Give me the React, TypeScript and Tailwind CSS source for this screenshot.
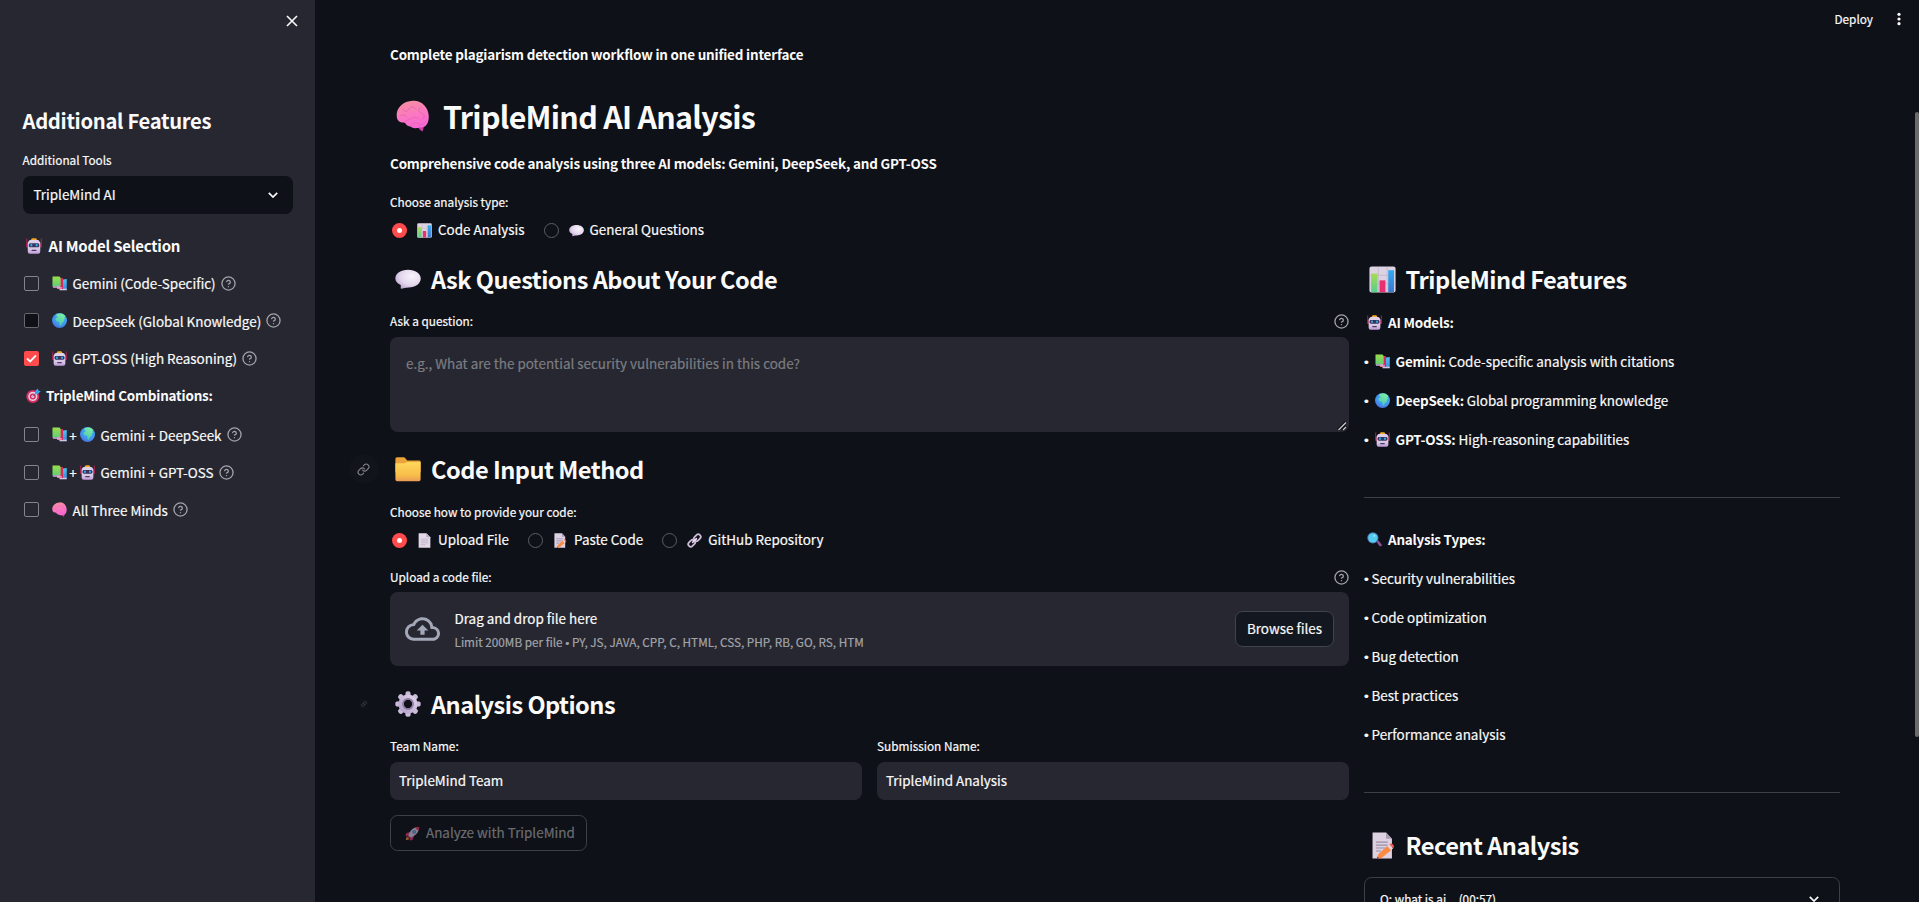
import React, { useState } from 'react';

type EmojiName =
  | 'brain' | 'chart' | 'speech' | 'folder' | 'page' | 'memo' | 'link'
  | 'gear' | 'rocket' | 'robot' | 'books' | 'globe' | 'dart' | 'lens';

const drawings: Record<EmojiName, React.ReactNode> = {
  brain: (
    <>
      <defs>
        <linearGradient id="brainFill" x1="0.3" y1="0" x2="0.6" y2="1">
          <stop offset="0" stopColor="#f58fa0" />
          <stop offset="0.55" stopColor="#fb77c4" />
          <stop offset="1" stopColor="#f767d8" />
        </linearGradient>
      </defs>
      <path d="M20 25 L27 25 L25.500 31.500 Q23 31 21.500 28Z" fill="#c93f9f" />
      <path d="M16 .800 C24 0 31 7 31.300 16 C31.500 24 28 28 23 27.500 C20 28 16 29 14 26.500 C11 26.500 9 24 8.500 22.500 C4 23 .800 21 .700 16 C0 8 7 1 16 .800Z" fill="url(#brainFill)" />
      <g fill="none" stroke="#e865a8" strokeWidth="0.900" strokeLinecap="round">
        <path d="M8 22.500 C11 19 13 20 15 18.500 S19 17 21.500 18.500" />
        <path d="M6 9 C8 12 11 12 12.500 9 S17 6 18.500 9" />
        <path d="M24 7 C21 8 21 12 24 13 S28 16 26 19" />
        <path d="M14 26 C16 22 20 22 22 24 S27 23 28 21" />
        <path d="M4 16 C6 14 9 15 10 17" />
      </g>
    </>
  ),
  chart: (
    <>
      <rect x="0.500" y="0.500" width="31" height="31" rx="2.500" fill="#dcd3e2" />
      <path d="M1 11h30M1 21h30M11 1v30M21.500 1v30" stroke="#c2b7cb" strokeWidth="1" />
      <defs>
        <linearGradient id="barGreen" x1="0" y1="0" x2="0" y2="1"><stop offset="0" stopColor="#a8db50" /><stop offset="1" stopColor="#56cf8d" /></linearGradient>
        <linearGradient id="barBlue" x1="0" y1="0" x2="0" y2="1"><stop offset="0" stopColor="#30aaf2" /><stop offset="1" stopColor="#3b78cf" /></linearGradient>
      </defs>
      <rect x="2.500" y="9" width="7.500" height="22" fill="url(#barGreen)" />
      <rect x="12.500" y="17" width="7" height="14" fill="#e6306f" />
      <rect x="22.800" y="5" width="6.800" height="26" fill="url(#barBlue)" />
    </>
  ),
  speech: (
    <>
      <defs>
        <radialGradient id="speechFill" cx="0.65" cy="0.35" r="0.75"><stop offset="0" stopColor="#f9f4fb" /><stop offset="0.6" stopColor="#e3d7ec" /><stop offset="1" stopColor="#b9a4cf" /></radialGradient>
      </defs>
      <path d="M16 4.500 C25 4.500 31.700 9 31.700 15.500 C31.500 22 25 26.500 17 26.500 C13 26.500 10 28 7.500 28 C6.500 28 7.500 25.500 7 23.500 C3 21.500 .400 19 .400 15.500 C.400 9 7 4.500 16 4.500Z" fill="url(#speechFill)" />
    </>
  ),
  folder: (
    <>
      <defs><linearGradient id="folderFill" x1="0" y1="0" x2="0" y2="1"><stop offset="0" stopColor="#ffd75b" /><stop offset="0.7" stopColor="#f8bd49" /><stop offset="1" stopColor="#e99a58" /></linearGradient></defs>
      <path d="M.5 3.500 Q.5 1.500 2.500 1.500 H10.500 Q12 1.500 13 3 L15 5.500 H30 Q31.500 5.500 31.500 7 V20 H.5Z" fill="#eca43a" />
      <path d="M.5 9 H12 L15 7.500 H31.500 V29 Q31.500 31 29.500 31 H2.500 Q.5 31 .5 29Z" fill="url(#folderFill)" />
    </>
  ),
  page: (
    <>
      <path d="M3.500 .500 H20 L28.500 9 V31.500 H3.500Z" fill="#e2d8e8" />
      <path d="M20 .500 L28.500 9 H20Z" fill="#b8aabf" />
      <path d="M8 13h16M8 17h16M8 21h16M8 25h10" stroke="#b3a6bc" strokeWidth="1.300" />
    </>
  ),
  memo: (
    <>
      <path d="M3 .5 H19 L26 8 V31.500 H3Z" fill="#ddd1e2" />
      <path d="M19 .5 L26 8 H19Z" fill="#a99cb1" />
      <path d="M7 12h14M7 15.500h14M7 19h11M7 22.500h6" stroke="#9a8da6" strokeWidth="1.300" />
      <path d="M20.500 16.500 L25 21.500 L14 30.500 L8 32 L10 26Z" fill="#fb8b43" />
      <path d="M20.500 16.500 L23 14.500 L27.500 19.300 L25 21.500Z" fill="#e8d3d9" />
      <path d="M23 14.500 Q25 12.500 27 14.500 Q29.500 17 27.500 19.300Z" fill="#f2564f" />
      <path d="M8.800 29 L8 32 L11 31Z" fill="#7a3a63" />
    </>
  ),
  link: (
    <g fill="none" strokeLinecap="round">
      <rect x="-8" y="-5.300" width="16" height="10.600" rx="5.300" transform="translate(10 22) rotate(-45)" stroke="#cdbbd8" strokeWidth="3.800" />
      <rect x="-8" y="-5.300" width="16" height="10.600" rx="5.300" transform="translate(22 10) rotate(-45)" stroke="#cdbbd8" strokeWidth="3.800" />
      <path d="M12 20 L20 12" stroke="#eadff0" strokeWidth="3.200" />
    </g>
  ),
  gear: (
    <>
      <defs><linearGradient id="gearFill" x1="1" y1="0" x2="0" y2="1"><stop offset="0" stopColor="#ddd2e6" /><stop offset="1" stopColor="#b5a2cc" /></linearGradient></defs>
      <g fill="#c9bbd9">
        {[0, 45, 90, 135, 180, 225, 270, 315].map((a) => (
          <path key={a} d="M12.500 6 L13 2 Q13.500 .3 16 .3 Q18.500 .3 19 2 L19.500 6Z" transform={`rotate(${a} 16 16)`} />
        ))}
      </g>
      <circle cx="16" cy="16" r="8.800" fill="none" stroke="url(#gearFill)" strokeWidth="6" />
      <circle cx="16" cy="16" r="6.200" fill="none" stroke="#8f7da3" strokeWidth="2.200" />
    </>
  ),
  rocket: (
    <>
      <path d="M1.500 30.500 L4 22 L10 28Z" fill="#f49a3c" />
      <path d="M11 13 L3 15 Q1 18 1 22 L9 20Z M19 21 L17 29 Q14 31 10 31 L12 23Z" fill="#e0387a" />
      <path d="M30 2 Q20 2 13 9 Q8 15 7 21 L11 25 Q18 23 23 18 Q30 12 30 2Z" fill="#d8c9e6" />
      <path d="M30.500 1.500 Q25 1.500 21.500 3.500 L28.500 10.500 Q30.500 7 30.500 1.500Z" fill="#e9375f" />
      <path d="M7 20 L12 25 L8 27 L5 24Z" fill="#c22b63" />
      <circle cx="19.500" cy="12.500" r="4" fill="#8b7aa8" />
      <circle cx="19.500" cy="12.500" r="2.600" fill="#46b4ef" />
    </>
  ),
  robot: (
    <>
      <defs><linearGradient id="robotFill" x1="0" y1="0" x2="0" y2="1"><stop offset="0" stopColor="#dfd2ea" /><stop offset="0.65" stopColor="#d9c8e4" /><stop offset="1" stopColor="#c09bd9" /></linearGradient></defs>
      <path d="M1.500 1 V18M30.500 1 V18" stroke="#c5265d" strokeWidth="1.700" />
      <rect x="0.500" y="11" width="4" height="8" fill="#a81f55" />
      <rect x="27.500" y="11" width="4" height="8" fill="#a81f55" />
      <path d="M10 4 Q10 .5 13 .5 H19 Q22 .5 22 4 V6 H10Z" fill="#f6a823" />
      <path d="M6 5.500 Q6 4 9 4 H23 Q26 4 26 5.500 L28.500 9 V27 Q28.500 31.500 24 31.500 H8 Q3.500 31.500 3.500 27 V9Z" fill="url(#robotFill)" />
      <rect x="5.500" y="10.500" width="21" height="8" rx="3" fill="#3a3459" />
      <rect x="8.500" y="11.500" width="4.200" height="5.500" rx="2" fill="#2fa9ee" />
      <rect x="19.300" y="11.500" width="4.200" height="5.500" rx="2" fill="#2fa9ee" />
      <rect x="11" y="23.500" width="10" height="2.600" rx="1.300" fill="#483c66" />
    </>
  ),
  books: (
    <>
      <defs>
        <linearGradient id="bookGreen" x1="0" y1="0" x2="0" y2="1"><stop offset="0" stopColor="#9ade4b" /><stop offset="1" stopColor="#63cf74" /></linearGradient>
        <linearGradient id="bookBlue" x1="0" y1="0" x2="0" y2="1"><stop offset="0" stopColor="#4fc3f3" /><stop offset="1" stopColor="#3d8fe0" /></linearGradient>
      </defs>
      <path d="M20 8 L31.500 6.500 V28 H17Z" fill="url(#bookBlue)" />
      <path d="M16 27 H31.500 V30.500 H16Z" fill="#d4c4e6" />
      <path d="M10 4 H23.500 V27.500 H11Z" fill="#d9285f" />
      <path d="M11 24 H21 V27 H11Z" fill="#e0b8cd" />
      <path d="M1 1 H16 L18.500 4 V22 H1Z" fill="url(#bookGreen)" />
      <path d="M1 22 H17.500 V25 H2.500Z" fill="#cbb8dd" />
    </>
  ),
  globe: (
    <>
      <defs>
        <radialGradient id="globeFill" cx="0.6" cy="0.3" r="0.8"><stop offset="0" stopColor="#3fb8f5" /><stop offset="0.65" stopColor="#4193ee" /><stop offset="1" stopColor="#4a63d4" /></radialGradient>
        <linearGradient id="landFill" x1="0.8" y1="0" x2="0.3" y2="1"><stop offset="0" stopColor="#7df0a0" /><stop offset="1" stopColor="#4fc6b0" /></linearGradient>
      </defs>
      <circle cx="16" cy="16" r="16" fill="url(#globeFill)" />
      <path d="M9 3 Q15 0 22 1.500 Q26 3.500 28.500 7 L26 9 L28 12 L25 14 L25 19 L21 21 L19 27 L16.500 26 L15.500 19 L10 17.500 L7 14 L9 10.500 L13 9 L9.500 6.500Z" fill="url(#landFill)" />
    </>
  ),
  dart: (
    <>
      <circle cx="14.500" cy="18" r="13.800" fill="#d92d64" />
      <circle cx="14.500" cy="18" r="9.800" fill="#e3d0e2" />
      <circle cx="14.500" cy="18" r="6.500" fill="#d92d64" />
      <circle cx="14.500" cy="18" r="3.200" fill="#e3d0e2" />
      <path d="M14.500 18 L25 7.500" stroke="#56617f" strokeWidth="2" />
      <path d="M20 12 V6 L25 .8 L26.500 5.500 L31.500 7 L26 12Z" fill="#35a5ea" />
    </>
  ),
  lens: (
    <>
      <path d="M20 21 L24 17.500 L31 26 Q32 28.500 30.500 30 Q28.500 31.500 26.500 30Z" fill="#8a5196" />
      <circle cx="12.500" cy="12.500" r="12" fill="#4a78b2" />
      <circle cx="12.500" cy="12.500" r="10" fill="#55caf1" />
      <ellipse cx="15.500" cy="8" rx="2.500" ry="2" fill="#9be7fb" />
    </>
  ),
};

const Emoji = ({ name, className = 'size-[15px]' }: { name: EmojiName; className?: string }) => (
  <svg viewBox="0 0 32 32" preserveAspectRatio="none" className={`block shrink-0 ${className}`} aria-hidden="true">
    {drawings[name]}
  </svg>
);

const Help = () => (
  <svg viewBox="0 0 24 24" className="block size-[15px] shrink-0 text-[#a3a4a9]" fill="none" stroke="currentColor" strokeWidth="2.100" strokeLinecap="round" strokeLinejoin="round">
    <circle cx="12" cy="12" r="10.500" />
    <path d="M9.090 9a3 3 0 0 1 5.830 1c0 2-3 3-3 3" />
    <path d="M12 17h.01" />
  </svg>
);

const Chevron = () => (
  <svg viewBox="0 0 10 6" className="block h-[6px] w-[10px]" fill="none" stroke="#fafafa" strokeWidth="1.700">
    <path d="M.8.800 5 5 9.200.800" />
  </svg>
);

const Bullet = ({ className = '' }: { className?: string }) => (
  <span className={`font-['Liberation_Sans',sans-serif] ${className}`}>•</span>
);

const LinkGlyph = ({ className }: { className: string }) => (
  <svg viewBox="0 0 24 24" className={className} fill="none" stroke="#fafafa" strokeWidth="2" strokeLinecap="round" strokeLinejoin="round">
    <path d="M10 13a5 5 0 0 0 7.540.540l3-3a5 5 0 0 0-7.070-7.070l-1.720 1.710" />
    <path d="M14 11a5 5 0 0 0-7.540-.540l-3 3a5 5 0 0 0 7.070 7.070l1.710-1.710" />
  </svg>
);

const Label = ({ children, help, className = '' }: { children: React.ReactNode; help?: boolean; className?: string }) => (
  <div className={`flex h-5 items-center justify-between text-[11.8px] leading-5 ${className}`}>
    <span>{children}</span>
    {help && <Help />}
  </div>
);

const Heading = ({ emoji, emojiClass, children, className = '' }: { emoji: EmojiName; emojiClass: string; children: React.ReactNode; className?: string }) => (
  <h3 className={`relative flex h-[30px] items-center text-[23.600px] leading-[30px] font-semibold tracking-[-0.022em] whitespace-nowrap [-webkit-text-stroke:0px] ${className}`}>
    <Emoji name={emoji} className={emojiClass} />
    <span>{children}</span>
  </h3>
);

interface Choice { emoji: EmojiName; label: string; }

const Radios = ({ choices, className = '' }: { choices: Choice[]; className?: string }) => {
  const [active, setActive] = useState(0);
  return (
    <div className={`flex h-6 items-center gap-[19px] pl-[2px] ${className}`}>
      {choices.map((c, i) => (
        <button key={c.label} onClick={() => setActive(i)} className="flex items-center leading-[22px] whitespace-nowrap">
          <span className={i === active
            ? 'flex size-[15px] items-center justify-center rounded-full bg-[#ff4b4b]'
            : 'flex size-[15px] items-center justify-center rounded-full border border-[#5b5e64]'}>
            {i === active && <span className="size-[5px] rounded-full bg-white" />}
          </span>
          <Emoji name={c.emoji} className="mr-[6px] ml-[10px] size-[15px]" />
          <span className="mb-[2px]">{c.label}</span>
        </button>
      ))}
    </div>
  );
};

const CheckRow = ({ icons, label, checked, focused }: { icons: EmojiName[]; label: string; checked?: boolean; focused?: boolean }) => (
  <div className="flex h-[37.500px] items-center pl-[1.500px] whitespace-nowrap">
    <span className={`mr-[12.500px] flex size-[15px] shrink-0 items-center justify-center rounded-[2px] ${
      checked ? 'bg-[#ff4b4b]' : focused ? 'border border-[#67686e] bg-[#0e1117]' : 'border border-[#83848a]'}`}>
      {checked && (
        <svg viewBox="0 0 12 10" className="h-[9px] w-[11px]" fill="none" stroke="#fff" strokeWidth="2">
          <path d="M1 5 4.500 8.300 11 1.500" />
        </svg>
      )}
    </span>
    {icons.map((icon, i) => (
      <React.Fragment key={icon}>
        {i > 0 && <span className="w-[13px] text-center">+</span>}
        <Emoji name={icon} />
      </React.Fragment>
    ))}
    <span className="mr-[5px] ml-[6px]">{label}</span>
    <Help />
  </div>
);

const Field = ({ label, value }: { label: string; value: string }) => (
  <div className="flex-1">
    <Label>{label}</Label>
    <div className="mt-[6px] flex h-[38px] items-center rounded-[7.500px] bg-[#262730] pb-[2px] pl-[9px]">{value}</div>
  </div>
);

const Model = ({ emoji, name, text }: { emoji: EmojiName; name: string; text: string }) => (
  <p className="flex h-6 items-center leading-6 whitespace-nowrap">
    <Bullet className="w-[11px] pt-[3px]" />
    <Emoji name={emoji} className="mr-[5.500px] size-[15px]" />
    <span><b className="font-semibold tracking-[-0.018em] [-webkit-text-stroke:0px]">{name}</b> {text}</span>
  </p>
);

const analysisTypes = ['Security vulnerabilities', 'Code optimization', 'Bug detection', 'Best practices', 'Performance analysis'];

export default function App() {
  return (
    <div className="relative flex h-[902px] w-full overflow-hidden bg-[#0e1117] font-['Noto_Sans_CJK_SC','Source_Sans_Pro',sans-serif] text-[13.450px] text-[#fafafa] [-webkit-text-stroke:0.2px]">
      <aside className="w-[315px] shrink-0 bg-[#262730] px-[22.500px]">
        <div className="-mr-[5px] flex h-[42px] items-center justify-end">
          <svg viewBox="0 0 12 12" className="size-[12px]" fill="none" stroke="#fafafa" strokeWidth="1.600">
            <path d="M1 1 11 11M11 1 1 11" />
          </svg>
        </div>
        <h2 className="mt-[64px] h-[30px] text-[20.250px] leading-[30px] font-semibold tracking-[-0.016em] whitespace-nowrap [-webkit-text-stroke:0px]">Additional Features</h2>
        <Label className="mt-[14px]">Additional Tools</Label>
        <div className="mt-[6px] flex h-[38px] items-center justify-between rounded-[7.500px] bg-[#0e1117] pr-[15px] pl-[11px]">
          <span className="mb-[2px]">TripleMind AI</span>
          <Chevron />
        </div>
        <div className="mt-[20px] flex h-6 items-center pl-[3px] text-[15px] leading-6 font-semibold tracking-[-0.015em] [-webkit-text-stroke:0px]">
          <Emoji name="robot" className="mr-[7px] size-[16px]" />
          <span>AI Model Selection</span>
        </div>
        <div className="mt-[6.500px]">
          <CheckRow icons={['books']} label="Gemini (Code-Specific)" />
          <CheckRow icons={['globe']} label="DeepSeek (Global Knowledge)" focused />
          <CheckRow icons={['robot']} label="GPT-OSS (High Reasoning)" checked />
        </div>
        <div className="mt-[6px] flex h-6 items-center pl-[3px] leading-6 font-semibold tracking-[-0.014em] [-webkit-text-stroke:0px]">
          <Emoji name="dart" className="mr-[5.500px] size-[15px]" />
          <span>TripleMind Combinations:</span>
        </div>
        <div className="mt-[9px]">
          <CheckRow icons={['books', 'globe']} label="Gemini + DeepSeek" />
          <CheckRow icons={['books', 'robot']} label="Gemini + GPT-OSS" />
          <CheckRow icons={['brain']} label="All Three Minds" />
        </div>
      </aside>

      <main className="flex h-full min-w-0 flex-1 flex-col pr-[79px] pl-[75px]">
        <p className="mt-[42px] h-6 leading-6 font-semibold tracking-[-0.014em] [-webkit-text-stroke:0px]">Complete plagiarism detection workflow in one unified interface</p>
        <h2 className="mt-[26px] flex h-12 items-center text-[30.400px] leading-[48px] font-semibold tracking-[-0.023em] whitespace-nowrap [-webkit-text-stroke:0px]">
          <Emoji name="brain" className="mr-[13.500px] ml-[6px] h-[32px] w-[33.500px]" />
          <span>TripleMind AI Analysis</span>
        </h2>
        <p className="mt-[11px] h-6 leading-6 font-semibold tracking-[-0.014em] [-webkit-text-stroke:0px]">Comprehensive code analysis using three AI models: Gemini, DeepSeek, and GPT-OSS</p>
        <Label className="mt-[17px]">Choose analysis type:</Label>
        <Radios
          className="mt-[6px]"
          choices={[
            { emoji: 'chart', label: 'Code Analysis' },
            { emoji: 'speech', label: 'General Questions' },
          ]}
        />

        <div className="mt-[22px] grid grid-cols-[959px_476px] gap-[15px]">
          <section>
            <Heading emoji="speech" emojiClass="mr-[10px] ml-[5px] size-[26px]">Ask Questions About Your Code</Heading>
            <Label help className="mt-[17px]">Ask a question:</Label>
            <div className="relative mt-[6px] h-[95px] rounded-[7.500px] bg-[#262730] px-4 pt-[14px] leading-6 text-[#7c7d82]">
              e.g., What are the potential security vulnerabilities in this code?
              <svg viewBox="0 0 10 10" className="absolute right-[2px] bottom-[1px] size-[10px]">
                <path d="M1 9 9 1M5 9 9 5" stroke="#0e1117" strokeWidth="3" />
                <path d="M1.500 9 9 1.500M6 9 9 6" stroke="#c9c9c9" strokeWidth="1.300" />
              </svg>
            </div>

            <Heading emoji="folder" emojiClass="mr-[10px] ml-[5px] size-[26px]" className="mt-[22px]">
              Code Input Method
              <span className="absolute top-0 left-[-41px] flex size-[30px] items-center justify-center rounded-full bg-[#11141b] pr-[1px]">
                <LinkGlyph className="size-[13px] opacity-50" />
              </span>
            </Heading>
            <Label className="mt-[18px]">Choose how to provide your code:</Label>
            <Radios
              className="mt-[6px]"
              choices={[
                { emoji: 'page', label: 'Upload File' },
                { emoji: 'memo', label: 'Paste Code' },
                { emoji: 'link', label: 'GitHub Repository' },
              ]}
            />
            <Label help className="mt-[15px]">Upload a code file:</Label>
            <div className="mt-[5px] flex h-[74px] items-center rounded-[7.500px] bg-[#262730] px-[15px]">
              <svg viewBox="0 0 24 16" className="h-[24px] w-[35px] shrink-0" fill="#a3a8b8">
                <path d="M19.350 6.040A7.490 7.490 0 0 0 12 0C9.110 0 6.600 1.640 5.350 4.040A5.994 5.994 0 0 0 0 10c0 3.310 2.690 6 6 6h13c2.760 0 5-2.240 5-5 0-2.640-2.050-4.780-4.650-4.960ZM19 14H6a4 4 0 0 1 0-8h.710A5.490 5.490 0 0 1 17.500 7.500V8H19a3 3 0 0 1 0 6Z" />
                <path d="M8 9h2.550v3h2.900V9H16l-4-4Z" />
              </svg>
              <div className="ml-[14.500px] flex-1 pt-[2px]">
                <div className="h-[23px] leading-[23px]">Drag and drop file here</div>
                <div className="h-[23px] text-[11.750px] leading-[23px] text-[#a3a4a9]">Limit 200MB per file <Bullet /> PY, JS, JAVA, CPP, C, HTML, CSS, PHP, RB, GO, RS, HTM</div>
              </div>
              <button className="h-9 w-[99px] rounded-[7.500px] border border-[#41444c] bg-[#131720] pb-[2px]">Browse files</button>
            </div>

            <Heading emoji="gear" emojiClass="mr-[10px] ml-[5px] size-[26px]" className="mt-[23px]">
              Analysis Options
              <span className="absolute top-[9px] left-[-32px] flex size-[12px] items-center justify-center rounded-full bg-[#10131a]">
                <LinkGlyph className="size-[6px] opacity-30" />
              </span>
            </Heading>
            <div className="mt-[17px] flex gap-[15px]">
              <Field label="Team Name:" value="TripleMind Team" />
              <Field label="Submission Name:" value="TripleMind Analysis" />
            </div>
            <button className="mt-[15px] flex h-9 w-[197px] items-center rounded-[7.500px] border border-[#3d4046] pl-[14px] text-[#6b6d72]">
              <Emoji name="rocket" className="mr-[6px] size-[15px] opacity-60" />
              <span className="mb-[2px] whitespace-nowrap">Analyze with TripleMind</span>
            </button>
          </section>

          <section>
            <Heading emoji="chart" emojiClass="mr-[9.500px] ml-[5px] size-[27px]">TripleMind Features</Heading>
            <div className="mt-4 flex flex-col gap-[15px]">
              <p className="flex h-6 items-center pl-[3px] leading-6 font-semibold tracking-[-0.016em] [-webkit-text-stroke:0px]">
                <Emoji name="robot" className="mr-[6px] size-[15px]" />
                <span>AI Models:</span>
              </p>
              <Model emoji="books" name="Gemini:" text="Code-specific analysis with citations" />
              <Model emoji="globe" name="DeepSeek:" text="Global programming knowledge" />
              <Model emoji="robot" name="GPT-OSS:" text="High-reasoning capabilities" />
            </div>
            <hr className="mt-[46px] border-[#3d4046]" />
            <div className="mt-[29px] flex flex-col gap-[15px]">
              <p className="flex h-6 items-center pl-[3px] leading-6 font-semibold tracking-[-0.016em] [-webkit-text-stroke:0px]">
                <Emoji name="lens" className="mr-[6px] size-[15px]" />
                <span>Analysis Types:</span>
              </p>
              {analysisTypes.map((t) => (
                <p key={t} className="flex h-6 items-center leading-6"><Bullet className="w-[7.500px] pt-[3px]" /><span>{t}</span></p>
              ))}
            </div>
            <hr className="mt-[46px] border-[#3d4046]" />
            <Heading emoji="memo" emojiClass="mr-[8.500px] ml-[6px] size-[27px]" className="mt-[37px]">Recent Analysis</Heading>
            <div className="mt-[17px] flex h-[46px] items-center justify-between rounded-[7.500px] border border-[#3d4046] pr-[20px] pb-[2px] pl-[15px] text-[11.800px]">
              <span>Q: what is ai... (00:57)</span>
              <Chevron />
            </div>
          </section>
        </div>
      </main>

      <div className="absolute top-[9px] right-[18px] flex h-[20px] items-center gap-[24px] text-[11.800px]">
        <span>Deploy</span>
        <svg viewBox="0 0 4 14" className="h-[14px] w-[4px]" fill="#fafafa">
          <circle cx="2" cy="2.300" r="1.600" /><circle cx="2" cy="7" r="1.600" /><circle cx="2" cy="11.700" r="1.600" />
        </svg>
      </div>
      <div className="absolute top-[112px] right-0 h-[625px] w-[4px] rounded-[2px] bg-[#6b6b6b]" />
    </div>
  );
}
